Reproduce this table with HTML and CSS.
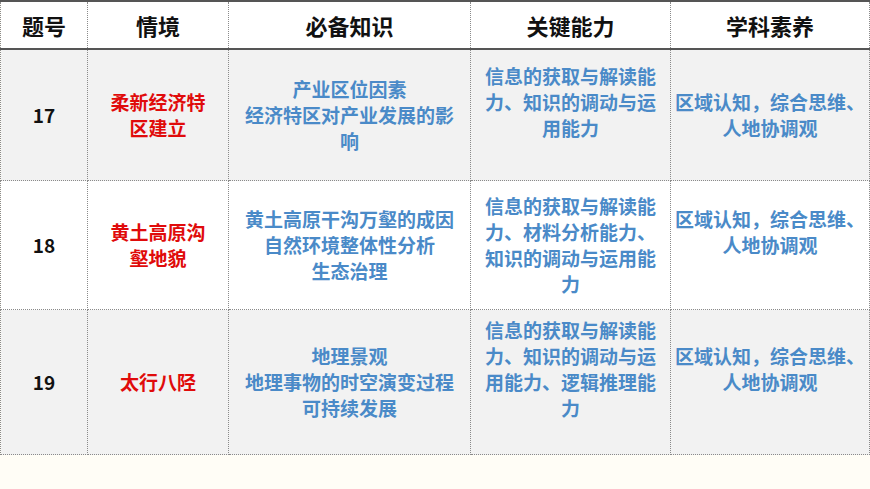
FILE: index.html
```html
<!DOCTYPE html>
<html lang="zh">
<head>
<meta charset="utf-8">
<link rel="stylesheet" href="styles.css">
</head>
<body>
<table class="grid">
  <colgroup>
    <col class="c1"><col class="c2"><col class="c3"><col class="c4"><col class="c5">
  </colgroup>
  <thead>
    <tr class="head">
      <th>题号</th><th>情境</th><th>必备知识</th><th>关键能力</th><th>学科素养</th>
    </tr>
  </thead>
  <tbody>
    <tr class="r1 shade">
      <td class="num">17</td>
      <td class="ctx">柔新经济特<br>区建立</td>
      <td class="blue">产业区位因素<br>经济特区对产业发展的影<br>响</td>
      <td class="blue">信息的获取与解读能<br>力、知识的调动与运<br>用能力<br>&nbsp;</td>
      <td class="blue">区域认知，综合思维、<br>人地协调观</td>
    </tr>
    <tr class="r2">
      <td class="num">18</td>
      <td class="ctx">黄土高原沟<br>壑地貌</td>
      <td class="blue">黄土高原干沟万壑的成因<br>自然环境整体性分析<br>生态治理</td>
      <td class="blue">信息的获取与解读能<br>力、材料分析能力、<br>知识的调动与运用能<br>力</td>
      <td class="blue">区域认知，综合思维、<br>人地协调观<br>&nbsp;</td>
    </tr>
    <tr class="r3 shade">
      <td class="num">19</td>
      <td class="ctx">太行八陉</td>
      <td class="blue">地理景观<br>地理事物的时空演变过程<br>可持续发展</td>
      <td class="blue">信息的获取与解读能<br>力、知识的调动与运<br>用能力、逻辑推理能<br>力<br>&nbsp;</td>
      <td class="blue">区域认知，综合思维、<br>人地协调观<br>&nbsp;</td>
    </tr>
  </tbody>
</table>
</body>
</html>
```

FILE: styles.css
```css
html, body {
  margin: 0;
  padding: 0;
  background: #fffdf6;
  width: 870px;
  height: 489px;
  overflow: hidden;
}
body {
  font-family: "Noto Sans CJK SC", "Noto Sans", sans-serif;
}
.grid {
  border-collapse: collapse;
  table-layout: fixed;
  width: 869px;
}
.c1 { width: 87px; }
.c2 { width: 141px; }
.c3 { width: 242px; }
.c4 { width: 200px; }
.c5 { width: 199px; }
.grid th, .grid td {
  border: 1px dotted #8a8a8a;
  text-align: center;
  vertical-align: middle;
  padding: 0;
  font-weight: 700;
}
.head th {
  background: #ffffff;
  color: #111111;
  font-size: 22px;
  height: 46px;
  line-height: 26px;
  border-top: 2px solid #555555;
  border-bottom: 2px solid #555555;
}
.grid td {
  font-size: 19px;
  line-height: 26px;
  background: #ffffff;
}
.shade td { background: #f2f2f2; }
.r1 td { height: 130px; }
.r2 td { height: 128px; }
.r3 td { height: 144px; }
.num { color: #111111; font-size: 18px; }
.ctx { color: #e00b0b; }
.blue { color: #4a8ac8; }
```
